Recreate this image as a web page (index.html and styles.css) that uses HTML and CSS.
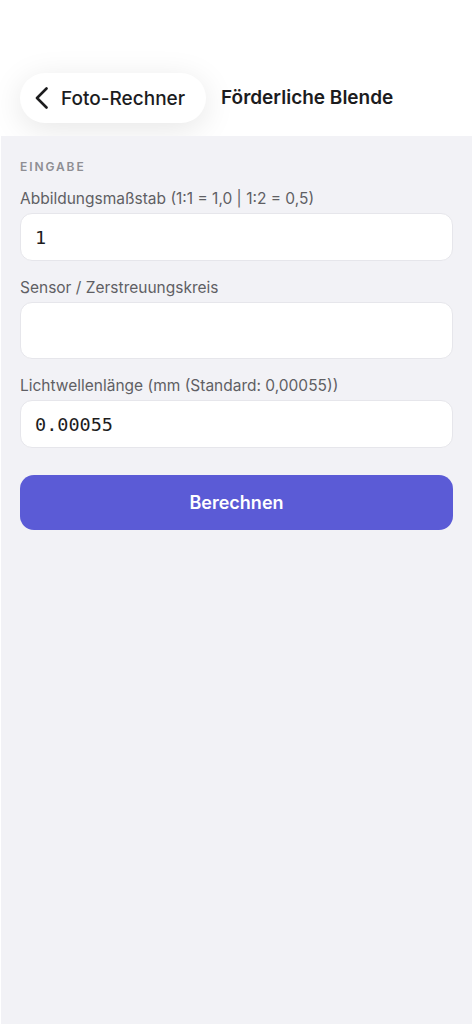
FILE: index.html
```html
<!DOCTYPE html>
<html lang="de">
<head>
    <meta charset="UTF-8">
    <meta name="viewport" content="width=device-width, initial-scale=1.0">
    <title>Förderliche Blende</title>
    <link rel="stylesheet" href="styles.css">
</head>
<body>
    <header class="nav">
        <button class="back">
            <svg class="chevron" width="14" height="22" viewBox="0 0 14 22">
                <path d="M11.5 1.5 L2 11 L11.5 20.5" fill="none" stroke="#1c1c1e" stroke-width="2.6" stroke-linecap="round" stroke-linejoin="round"/>
            </svg>
            <span>Foto-Rechner</span>
        </button>
        <h1 class="title">Förderliche Blende</h1>
    </header>

    <main class="content">
        <div class="section-title">EINGABE</div>

        <div class="field">
            <label>Abbildungsmaßstab (1:1 = 1,0 | 1:2 = 0,5)</label>
            <div class="input">1</div>
        </div>

        <div class="field">
            <label>Sensor / Zerstreuungskreis</label>
            <div class="input picker"></div>
        </div>

        <div class="field">
            <label>Lichtwellenlänge (mm (Standard: 0,00055))</label>
            <div class="input">0.00055</div>
        </div>

        <button class="calc">Berechnen</button>
    </main>
</body>
</html>
```

FILE: styles.css
```css
html, body {
    height: 100%;
}
body {
    margin: 0;
    font-family: Inter, "Noto Sans", sans-serif;
    background-color: #fff;
    color: #1c1c1e;
    display: flex;
    flex-direction: column;
}
.nav {
    height: 136px;
    box-sizing: border-box;
    padding: 73px 20px 0;
    display: flex;
    align-items: flex-start;
    gap: 15px;
    background: #fff;
}
.back {
    height: 50px;
    width: 186px;
    border: none;
    border-radius: 25px;
    background: #fff;
    box-shadow: 0 6px 32px rgba(0, 0, 0, 0.1);
    display: flex;
    align-items: center;
    gap: 12px;
    padding: 0 0 0 15px;
    font-family: inherit;
    font-size: 19px;
    font-weight: 500;
    color: #1c1c1e;
}
.chevron {
    display: block;
}
.title {
    margin: 0;
    line-height: 50px;
    font-size: 19px;
    font-weight: 600;
}
.content {
    flex: 1;
    background: #f2f2f6;
    margin: 0 1px;
    padding: 24px 19px 0;
}
.section-title {
    font-size: 12px;
    line-height: 14px;
    font-weight: 600;
    letter-spacing: 1.9px;
    color: #8e8e93;
    margin-bottom: 15px;
}
.field {
    margin-bottom: 17px;
}
.field label {
    display: block;
    font-size: 15.5px;
    line-height: 20px;
    color: #5f5f64;
    margin-bottom: 4px;
}
.input {
    height: 48px;
    box-sizing: border-box;
    background: #fff;
    border: 1px solid #e6e6eb;
    border-radius: 12px;
    padding: 0 14px;
    display: flex;
    align-items: center;
    font-family: "DejaVu Sans Mono", monospace;
    font-size: 18.5px;
    color: #1c1c1e;
}
.input.picker {
    height: 57px;
}
.calc {
    display: block;
    width: 100%;
    height: 55px;
    margin-top: 27px;
    border: none;
    border-radius: 14px;
    background: #5b5bd6;
    color: #fff;
    font-family: inherit;
    font-size: 18px;
    font-weight: 600;
}
```
